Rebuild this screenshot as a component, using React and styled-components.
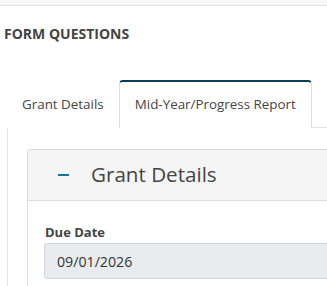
import React from "react";
import styled, {createGlobalStyle} from "styled-components";

const Global = createGlobalStyle`
  html, body {
    margin: 0;
    padding: 0;
    background: #fff;
    overflow: hidden;
  }
  body {
    font-family: "Open Sans", "Liberation Sans", sans-serif;
    color: #444;
  }
`

const Page = styled.div`
  width: 420px;
  height: 286px;
  overflow: hidden;
`

const TopBar = styled.div`
  height: 5px;
  background: #f8f8f8;
  border-bottom: 1px solid #e3e3e3;
`

const Heading = styled.h2`
  margin: 18px 0 0 4px;
  font-size: 14px;
  font-weight: 700;
  line-height: 19px;
  color: #444;
`

const Section = styled.div`
  margin: 37px 0 0 7px;
`

const TabBar = styled.div`
  display: flex;
  align-items: flex-end;
  margin-bottom: -1px;
`

const Tab = styled.div`
  padding: 13px 14px;
  font-size: 13.4px;
  line-height: 19px;
  color: #444;
  border: 1px solid transparent;
  border-top: 2px solid transparent;
  border-radius: 4px 4px 0 0;
  background: #fff;
  position: relative;
  z-index: 1;

  ${p => p.$active && `
    padding: 13px 15px;
    border-color: #ddd;
    border-top: 2px solid #0c3c5c;
    border-bottom-color: #fff;
  `}
`

const Panel = styled.div`
  border: 1px solid #e3e3e3;
  border-right: none;
  padding: 21px 0 0 19px;
  height: 200px;
`

const Card = styled.div`
  border: 1px solid #dcdcdc;
  border-right: none;
  border-radius: 4px 0 0 0;
  height: 200px;
`

const CardHeader = styled.div`
  display: flex;
  align-items: center;
  height: 50px;
  padding-left: 30px;
  background: #f5f5f5;
  border-bottom: 1px solid #dcdcdc;
  border-radius: 4px 0 0 0;
`

const Minus = styled.span`
  display: block;
  width: 11px;
  height: 2px;
  background: #1f6f9f;
  margin-right: 22px;
`

const CardTitle = styled.h3`
  margin: 0 0 2px;
  font-size: 20.6px;
  font-weight: 400;
  color: #444;
  line-height: 26px;
`

const CardBody = styled.div`
  padding: 22px 0 0 17px;
`

const Label = styled.label`
  display: block;
  font-size: 13px;
  font-weight: 700;
  line-height: 18px;
  color: #444;
  margin-bottom: 2px;
`

const Input = styled.div`
  box-sizing: border-box;
  height: 36px;
  padding: 0 12px;
  display: flex;
  align-items: center;
  font-size: 14.2px;
  color: #333;
  background: #e9ecef;
  border: 1px solid #ced4da;
  border-right: none;
  border-radius: 4px 0 0 4px;
  margin-left: -1px;
`

export default function App() {
    return (
        <Page>
            <Global/>
            <TopBar/>
            <Heading>FORM QUESTIONS</Heading>
            <Section>
                <TabBar>
                    <Tab>Grant Details</Tab>
                    <Tab $active>Mid-Year/Progress Report</Tab>
                </TabBar>
                <Panel>
                    <Card>
                        <CardHeader>
                            <Minus/>
                            <CardTitle>Grant Details</CardTitle>
                        </CardHeader>
                        <CardBody>
                            <Label>Due Date</Label>
                            <Input>09/01/2026</Input>
                        </CardBody>
                    </Card>
                </Panel>
            </Section>
        </Page>
    );
}
